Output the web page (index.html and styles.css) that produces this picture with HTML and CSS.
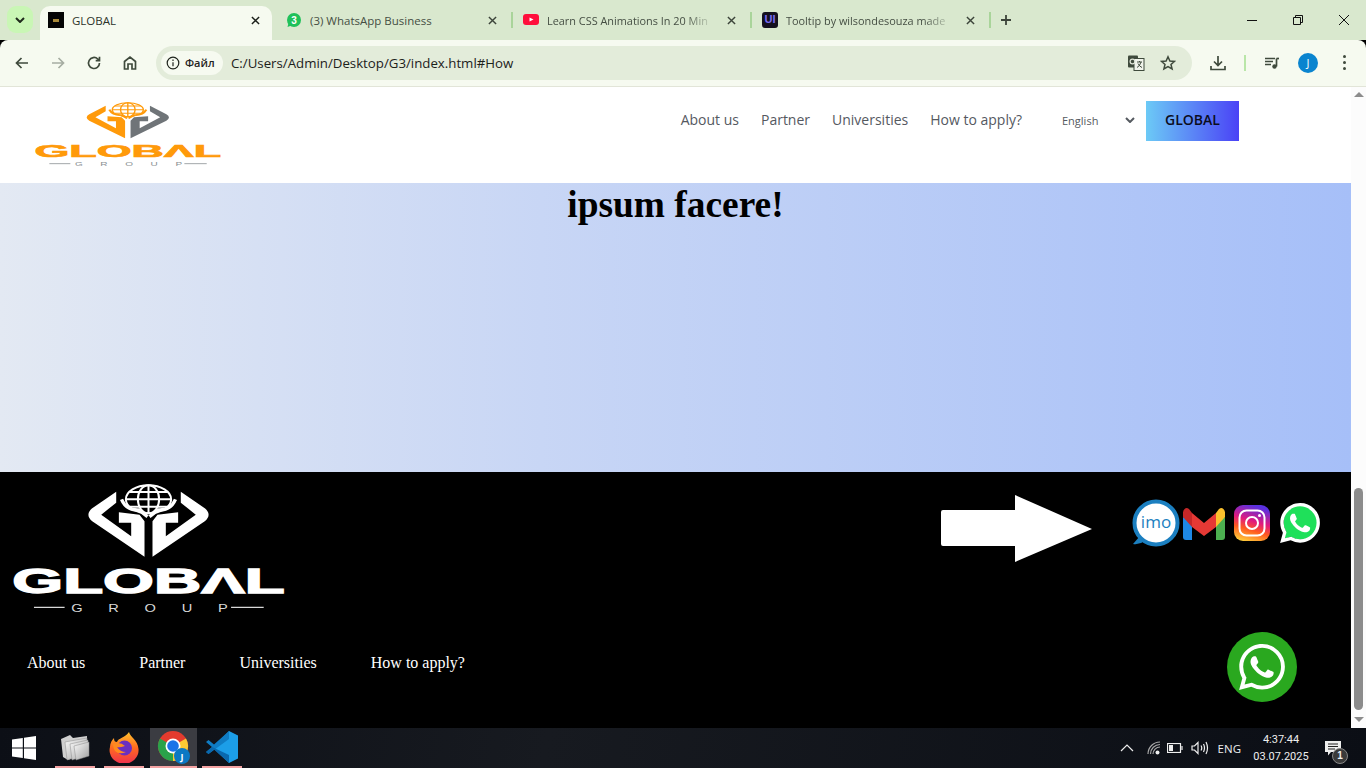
FILE: index.html
```html
<!DOCTYPE html>
<html lang="ru">
<head>
<meta charset="utf-8">
<title>GLOBAL</title>
<link rel="stylesheet" href="styles.css">
</head>
<body>

<svg class="defs" aria-hidden="true">
	<symbol id="logo" viewBox="40 30 820 390" preserveAspectRatio="none">
		<path class="logo-left" d="M350 53V86L305 122 395 187V146H358V115L420 122 435 142V248L278 142Q255 122 278 103Z"/>
		<path class="logo-right" d="M544 53V86L589 122 499 187V146H536V115L474 122 459 142V248L616 142Q639 122 616 103Z"/>
		<g class="logo-globe">
			<ellipse cx="447" cy="76" rx="68" ry="42"/>
			<ellipse cx="447" cy="76" rx="32" ry="42"/>
			<path d="M447 34V118M379 76H515M390 54H504M390 98H504"/>
		</g>
		<path class="logo-hands" d="M366 76Q380 110 418 108L444 128M528 76Q514 110 476 108L450 128"/>
		<path class="logo-rule" d="M103 400H195M695 400H793"/>
	</symbol>
	<symbol id="wa" viewBox="0 0 24 24">
		<path d="M17.472 14.382c-.297-.149-1.758-.867-2.03-.967-.273-.099-.471-.148-.67.15-.197.297-.767.966-.94 1.164-.173.199-.347.223-.644.075-.297-.15-1.255-.463-2.39-1.475-.883-.788-1.48-1.761-1.653-2.059-.173-.297-.018-.458.13-.606.134-.133.298-.347.446-.52.149-.174.198-.298.298-.497.099-.198.05-.371-.025-.52-.075-.149-.669-1.612-.916-2.207-.242-.579-.487-.5-.669-.51-.173-.008-.371-.01-.57-.01-.198 0-.52.074-.792.372-.272.297-1.04 1.016-1.04 2.479 0 1.462 1.065 2.875 1.213 3.074.149.198 2.096 3.2 5.077 4.487.709.306 1.262.489 1.694.625.712.227 1.36.195 1.871.118.571-.085 1.758-.719 2.006-1.413.248-.694.248-1.289.173-1.413-.074-.124-.272-.198-.57-.347m-5.421 7.403h-.004a9.87 9.87 0 01-5.031-1.378l-.361-.214-3.741.982.998-3.648-.235-.374a9.86 9.86 0 01-1.51-5.26c.001-5.45 4.436-9.884 9.888-9.884 2.64 0 5.122 1.03 6.988 2.898a9.825 9.825 0 012.893 6.994c-.003 5.45-4.437 9.884-9.885 9.884m8.413-18.297A11.815 11.815 0 0012.05 0C5.495 0 .16 5.335.157 11.892c0 2.096.547 4.142 1.588 5.945L.057 24l6.305-1.654a11.882 11.882 0 005.683 1.448h.005c6.554 0 11.89-5.335 11.893-11.893a11.821 11.821 0 00-3.48-8.413Z"/>
	</symbol>
	<symbol id="x" viewBox="0 0 10 10">
		<path d="M1 1L9 9M9 1L1 9"/>
	</symbol>
</svg>

<!-- browser chrome -->
<div class="tabstrip">
	<button class="tab_search"><svg width="10" height="6" viewBox="0 0 10 6"><path d="M1 1L5 5 9 1"/></svg></button>
	<div class="tab tab_active">
		<span class="favicon favicon_global"><i></i></span>
		<span class="tab_title">GLOBAL</span>
		<svg class="tab_x"><use href="#x"/></svg>
	</div>
	<div class="tab">
		<svg class="favicon" viewBox="0 0 16 16"><circle cx="8" cy="8" r="7" fill="#1fc15a"/><path d="M1.5 15L2.6 10.5 5.5 13.5Z" fill="#1fc15a"/><text class="favicon_num" x="8" y="11.5">3</text></svg>
		<span class="tab_title">(3) WhatsApp Business</span>
		<svg class="tab_x"><use href="#x"/></svg>
	</div>
	<i class="tab_sep"></i>
	<div class="tab">
		<svg class="favicon" viewBox="0 0 16 16"><rect y="2" width="16" height="11" rx="3" fill="#ff0f3c"/><path d="M6.5 5.5L10.5 7.5 6.5 9.5Z" fill="#fff"/></svg>
		<span class="tab_title tab_fade">Learn CSS Animations In 20 Min</span>
		<svg class="tab_x"><use href="#x"/></svg>
	</div>
	<i class="tab_sep"></i>
	<div class="tab">
		<span class="favicon favicon_ui">UI</span>
		<span class="tab_title tab_fade">Tooltip by wilsondesouza made</span>
		<svg class="tab_x"><use href="#x"/></svg>
	</div>
	<i class="tab_sep"></i>
	<svg class="tab_new" width="12" height="12" viewBox="0 0 12 12"><path d="M6 1V11M1 6H11"/></svg>
	<div class="window_btns">
		<svg viewBox="0 0 12 12"><path d="M1 6.500H11"/></svg>
		<svg viewBox="0 0 12 12"><path d="M1.500 3.500H8.500V10.500H1.500ZM3.500 3.500V1.500H10.500V8.500H8.500"/></svg>
		<svg viewBox="0 0 12 12"><path d="M1 1L11 11M11 1L1 11"/></svg>
	</div>
</div>

<div class="toolbar">
	<span class="tool"><svg viewBox="0 0 16 16"><path d="M14 8H2.5M7.5 3L2.5 8 7.5 13"/></svg></span>
	<span class="tool tool_off"><svg viewBox="0 0 16 16"><path d="M2 8H13.5M8.5 3L13.5 8 8.5 13"/></svg></span>
	<span class="tool"><svg viewBox="0 0 16 16"><path d="M13.5 8A5.5 5.5 0 1 1 11.8 4L13.5 5.6M13.5 1.8V5.6H9.7"/></svg></span>
	<span class="tool"><svg viewBox="0 0 16 16"><path d="M2.5 14V6.5L8 2 13.5 6.5V14H10V9H6V14Z"/></svg></span>
	<div class="omnibox">
		<span class="chip"><svg width="14" height="14" viewBox="0 0 14 14"><circle cx="7" cy="7" r="5.8"/><path d="M7 6.2V10.2M7 3.6V5"/></svg>Файл</span>
		<span class="url">C:/Users/Admin/Desktop/G3/index.html#How</span>
		<span class="omni_icon">
			<svg width="18" height="16" viewBox="0 0 18 16"><rect x="1" y="0.5" width="10" height="12" rx="1" fill="#3f4a3c"/><rect x="7" y="3.5" width="10" height="12" fill="#f1f4ec" stroke="#3f4a3c"/><path d="M10 7H15M12.5 6V7M14 7Q13 11 10 12.5M11 8.5Q12.5 11.5 15 12.5" fill="none" stroke="#3f4a3c"/><circle cx="5.5" cy="6.5" r="2.4" fill="none" stroke="#dfe5d8" stroke-width="1.2"/></svg>
		</span>
		<span class="omni_icon">
			<svg width="16" height="16" viewBox="0 0 16 16"><path class="stroke_icon" d="M8 1.8L9.9 6 14.5 6.4 11 9.4 12.1 14 8 11.6 3.9 14 5 9.4 1.5 6.4 6.1 6Z"/></svg>
		</span>
	</div>
	<span class="tool tool_dl"><svg viewBox="0 0 16 16"><path d="M8 1V10M4 6.5L8 10.5 12 6.5M1 11V14.5H15V11"/></svg></span>
	<i class="tool_sep"></i>
	<span class="tool"><svg viewBox="0 0 16 16"><path d="M1 3.5H11M1 6.5H9M1 9.5H7M12.5 3.5V11.5"/><circle class="note" cx="10.5" cy="11.5" r="2.2"/><path d="M12.5 3.5H15"/></svg></span>
	<span class="tool"><span class="avatar">J</span></span>
	<span class="tool tool_menu"><i></i><i></i><i></i></span>
</div>

<!-- page in the viewport -->
<div class="viewport">
	<div class="page">
		<header class="site_head">
			<svg class="logo_orange" viewBox="40 30 820 390" preserveAspectRatio="none">
				<use href="#logo" x="40" y="30" width="820" height="390"/>
				<text class="logo-word" x="38" y="358" textLength="818" lengthAdjust="spacingAndGlyphs">GLOBΛL</text>
				<text class="logo-sub" transform="translate(215 415) scale(1 .72)" textLength="470">GROUP</text>
			</svg>
			<nav class="site_nav">
				<a>About us</a>
				<a>Partner</a>
				<a>Universities</a>
				<a>How to apply?</a>
			</nav>
			<div class="lang">
				<span>English</span>
				<svg width="10" height="6" viewBox="0 0 10 6"><path d="M1 1L5 5 9 1"/></svg>
			</div>
			<a class="btn_global">GLOBAL</a>
		</header>

		<section class="hero">
			<h1>ipsum facere!</h1>
		</section>

		<footer class="site_foot">
			<div class="foot_top">
				<svg class="logo_white" viewBox="40 30 820 390" preserveAspectRatio="none">
					<use href="#logo" x="40" y="30" width="820" height="390"/>
					<text class="logo-word" x="38" y="358" textLength="818" lengthAdjust="spacingAndGlyphs">GLOBΛL</text>
					<text class="logo-sub" transform="translate(215 415) scale(1 .72)" textLength="470">GROUP</text>
				</svg>
				<div class="social">
					<svg class="arrow" viewBox="0 0 151 67"><path d="M2 15H74V0L151 34 74 67V51H2Q0 51 0 49V17Q0 15 2 15Z"/></svg>
					<svg class="ic_imo" viewBox="0 0 48 48">
						<circle cx="24" cy="24" r="21.5" fill="#fff" stroke="#1b7fc0" stroke-width="4"/>
						<path d="M1 45L8 37 13 42Q7 46 1 45Z" fill="#1b7fc0"/>
						<text class="imo_text" x="24" y="29">imo</text>
					</svg>
					<svg class="ic_gmail" viewBox="0 0 42 33">
						<path d="M0 10V30Q0 33 3 33H9V14Z" fill="#1e88e5"/>
						<path d="M33 14V33H39Q42 33 42 30V10Z" fill="#4caf50"/>
						<path d="M9 6L21 16 33 6V20L21 29 9 20Z" fill="#e53935"/>
						<path d="M0 5V10L9 20V6L6 2Q2 -1 0 5Z" fill="#c62828"/>
						<path d="M42 5V10L33 20V6L36 2Q40 -1 42 5Z" fill="#fbc02d"/>
					</svg>
					<svg class="ic_insta" viewBox="0 0 36 36">
						<defs>
							<linearGradient id="ig" x1="0.2" y1="1" x2="0.5" y2="0">
								<stop offset="0" stop-color="#ffd23c"/>
								<stop offset="0.35" stop-color="#ff5a1f"/>
								<stop offset="0.6" stop-color="#e0197f"/>
								<stop offset="1" stop-color="#5a30e0"/>
							</linearGradient>
						</defs>
						<rect width="36" height="36" rx="9" fill="url(#ig)"/>
						<rect x="5.5" y="5.5" width="25" height="25" rx="7" fill="none" stroke="#fff" stroke-width="2"/>
						<circle cx="18" cy="18" r="6" fill="none" stroke="#fff" stroke-width="2"/>
						<circle cx="25.5" cy="10.5" r="1.5" fill="#fff"/>
					</svg>
					<svg class="ic_wa" viewBox="0 0 40 40">
						<circle cx="20.5" cy="19.5" r="17" fill="#1fe05a"/>
						<path d="M4 36L7 27 13 33Z" fill="#1fe05a"/>
						<use href="#wa" width="40" height="40" class="wa_white"/>
					</svg>
				</div>
			</div>
			<nav class="foot_nav">
				<a>About us</a>
				<a>Partner</a>
				<a>Universities</a>
				<a>How to apply?</a>
			</nav>
			<a class="wa_float"><svg><use href="#wa"/></svg></a>
		</footer>
	</div>
	<div class="scrollbar">
		<i class="scroll_up"></i>
		<i class="scroll_thumb"></i>
		<i class="scroll_down"></i>
	</div>
</div>

<!-- windows taskbar -->
<div class="taskbar">
	<span class="task task_start">
		<svg width="24" height="24" viewBox="0 0 24 24"><path d="M0 3.5L10.8 2V11.4H0ZM12 1.8L24 0V11.4H12ZM0 12.6H10.8V22L0 20.5ZM12 12.6H24V24L12 22.2Z"/></svg>
	</span>
	<span class="task task_open">
		<svg width="30" height="28" viewBox="0 0 30 28">
			<defs><linearGradient id="fd" x1="0" y1="0" x2="1" y2="1"><stop offset="0" stop-color="#fafafa"/><stop offset="1" stop-color="#a0a0a0"/></linearGradient></defs>
			<path d="M1 6L10 2 13 5 27 3V20L8 27 3 24Z" fill="#cfcfcf"/>
			<path d="M5 9L27 5V21L7 27Z" fill="url(#fd)" stroke="#8a8a8a" stroke-width="0.5"/>
			<path d="M10 11L28 7V22L12 27Z" fill="url(#fd)" stroke="#8a8a8a" stroke-width="0.5"/>
			<path d="M14 13L29 9V23L16 27Z" fill="url(#fd)" stroke="#8a8a8a" stroke-width="0.5"/>
		</svg>
	</span>
	<span class="task task_open task_ff">
		<svg width="32" height="32" viewBox="0 0 32 32">
			<defs><linearGradient id="ff" x1="0.5" y1="0" x2="0.5" y2="1"><stop offset="0" stop-color="#ffc22e"/><stop offset="0.5" stop-color="#ff6a1f"/><stop offset="1" stop-color="#f0304f"/></linearGradient></defs>
			<path d="M21 1C22 6 30 9 30.500 18A14.500 13.500 0 1 1 2 16C2 12 4 9 6 7C6 10 7 11 9 11C10 7 17 7 21 1Z" fill="url(#ff)"/>
			<circle cx="16.500" cy="17" r="7.500" fill="#6a2fc0"/>
			<path d="M5 13Q12 10 17 15Q11 17 9 16Q12 21 18 21Q11 24 7 20Q5 17 5 13Z" fill="#ff8a1f"/>
		</svg>
	</span>
	<span class="task task_chrome">
		<svg width="34" height="34" viewBox="0 0 34 34">
			<circle cx="16" cy="16" r="15" fill="#e33b2e"/>
			<path d="M16 16L3 8.500A15 15 0 0 0 16 31L23.500 18Z" fill="#2aa24a"/>
			<path d="M16 16L29 8.500A15 15 0 0 1 16 31Z" fill="#fcc934"/>
			<circle cx="16" cy="16" r="7.500" fill="#fff"/>
			<circle cx="16" cy="16" r="5.800" fill="#1a73e8"/>
			<circle cx="25" cy="26" r="8" fill="#0b78c4"/>
			<text class="badge_j" x="25" y="29.500">J</text>
		</svg>
	</span>
	<span class="task task_open">
		<svg width="34" height="34" viewBox="0 0 34 34">
			<path d="M24 1L33 5.500V28.500L24 33 8 18Z" fill="#1c9ee8"/>
			<path d="M24 1L9 14.500 3.500 10 1 12 7 17 1 22 3.500 24 24 9Z" fill="#0f7cc4"/>
			<path d="M24 33V25L7 17 1 22 3.500 24 9 19.500Z" fill="#0a68ad"/>
		</svg>
	</span>
	<div class="tray">
		<svg class="tray_icon tray_up" width="14" height="8" viewBox="0 0 14 8"><path d="M1 7L7 1 13 7"/></svg>
		<svg class="tray_icon tray_wifi" width="14" height="14" viewBox="0 0 14 14"><path d="M1 13A12 12 0 0 1 13 1M3.500 13A9.500 9.500 0 0 1 13 3.500M6 13A7 7 0 0 1 13 6"/><circle cx="10.500" cy="11.500" r="2" class="tray_dot"/></svg>
		<svg class="tray_icon tray_bat" width="16" height="10" viewBox="0 0 16 10"><rect x="0.500" y="0.500" width="13" height="9"/><rect x="2" y="2" width="4" height="6" class="tray_dot"/><path d="M15 3V7"/></svg>
		<svg class="tray_icon tray_vol" width="18" height="14" viewBox="0 0 18 14"><path d="M1 5V9H3.500L7 12.500V1.500L3.500 5ZM10 4.500Q11.500 7 10 9.500M12.500 3Q14.500 7 12.500 11M15 1Q18 7 15 13"/></svg>
		<span class="tray_lang">ENG</span>
		<span class="clock"><b>4:37:44</b><b>03.07.2025</b></span>
		<span class="notif">
			<svg width="16" height="15" viewBox="0 0 16 15"><path class="tray_dot" d="M0 0H16V11H6L3 14.500V11H0Z"/><path class="notif_lines" d="M3 3H13M3 5.500H13M3 8H10"/></svg>
			<em>1</em>
		</span>
	</div>
</div>

</body>
</html>
```

FILE: styles.css
```css
* {
	box-sizing: border-box;
}
html, body {
	margin: 0;
	height: 768px;
	overflow: hidden;
}
body {
	font-family: "Open Sans", "Noto Sans", sans-serif;
	display: flex;
	flex-direction: column;
	background: #000;
}
.defs {
	width: 0;
	height: 0;
	display: block;
}
a {
	text-decoration: none;
}

/* tabs */
.tabstrip {
	height: 40px;
	background: #d9e8ce;
	display: flex;
	align-items: flex-end;
	padding-left: 7px;
	flex: none;
}
.tab_search {
	width: 26px;
	height: 27px;
	margin: 0 7px 7px 0;
	padding: 0;
	border: 0;
	border-radius: 9px;
	background: #c9f6b5;
	display: flex;
	align-items: center;
	justify-content: center;
}
.tab_search path {
	fill: none;
	stroke: #1f2a1c;
	stroke-width: 2;
}
.tab {
	width: 238px;
	height: 34px;
	display: flex;
	align-items: center;
	padding: 0 13px 6px 12px;
	font-size: 11.5px;
	color: #454e43;
}
.tab + .tab_sep {
	margin-left: -1px;
}
.tab_sep + .tab {
	padding-left: 10px;
}
.tab_active {
	width: 232px;
	margin-right: 2px;
	padding: 0 10px 6px 8px;
	background: #f6faf0;
	border-radius: 10px 10px 0 0;
	color: #2c322a;
}
.tab_sep {
	width: 2px;
	height: 16px;
	margin-bottom: 12px;
	background: #a9d49a;
	flex: none;
}
.favicon {
	width: 16px;
	height: 16px;
	flex: none;
	margin-right: 8px;
}
.favicon_global {
	background: #050505;
	display: flex;
	align-items: center;
	justify-content: center;
}
.favicon_global i {
	width: 6px;
	height: 3px;
	background: #a98a3a;
}
.favicon_num {
	font: bold 10px "Liberation Sans", sans-serif;
	text-anchor: middle;
	fill: #fff;
}
.favicon_ui {
	background: #14101f;
	border-radius: 3px;
	color: #7c6cf0;
	font: bold 11px/15px "Liberation Sans", sans-serif;
	text-align: center;
}
.tab_title {
	flex: 1;
	white-space: nowrap;
	overflow: hidden;
}
.tab_fade {
	font-size: 10.9px;
	-webkit-mask-image: linear-gradient(90deg, #000 82%, transparent);
	mask-image: linear-gradient(90deg, #000 82%, transparent);
}
.tab_x {
	width: 9px;
	height: 9px;
	margin-left: 12px;
	margin-right: 2px;
	flex: none;
	fill: none;
	stroke: #3c443a;
	stroke-width: 1.6;
}
.tab_active .tab_x {
	stroke: #1b1f1a;
}
.tab_new {
	margin: 0 0 14px 9px;
	fill: none;
	stroke: #3c443a;
	stroke-width: 1.8;
}
.window_btns {
	margin-left: auto;
	height: 40px;
	display: flex;
	align-items: center;
	align-self: flex-start;
	gap: 34px;
	padding-right: 16px;
}
.window_btns svg {
	width: 12px;
	height: 12px;
	fill: none;
	stroke: #111;
	stroke-width: 1;
}

/* toolbar */
.toolbar {
	height: 47px;
	background: #f6faf0;
	border-bottom: 1px solid #e2e5d8;
	display: flex;
	align-items: center;
	padding: 0 4px 1px;
	flex: none;
	border-radius: 8px 8px 0 0;
}
.tool {
	width: 36px;
	height: 34px;
	display: flex;
	align-items: center;
	justify-content: center;
	flex: none;
}
.tool svg {
	width: 16px;
	height: 16px;
	fill: none;
	stroke: #3f4a3c;
	stroke-width: 1.7;
}
.tool_off svg {
	stroke: #a6ada2;
}
.tool .note {
	fill: #3f4a3c;
	stroke: none;
}
.tool_dl {
	margin-left: 8px;
}
.tool_sep {
	width: 2px;
	height: 16px;
	margin: 0 8px;
	background: #b9e6a8;
	flex: none;
}
.avatar {
	width: 20px;
	height: 20px;
	border-radius: 50%;
	background: #0a84cf;
	color: #fff;
	font-size: 11px;
	line-height: 20px;
	text-align: center;
}
.tool_menu {
	flex-direction: column;
	gap: 3px;
}
.tool_menu i {
	width: 3px;
	height: 3px;
	border-radius: 50%;
	background: #3f4a3c;
}
.omnibox {
	width: 1036px;
	height: 34px;
	margin-left: 8px;
	padding: 0 8px 0 5px;
	border-radius: 17px;
	background: #e3ecda;
	display: flex;
	align-items: center;
	flex: none;
}
.chip {
	height: 24px;
	width: 62px;
	border-radius: 12px;
	background: #f6faf0;
	display: flex;
	align-items: center;
	gap: 5px;
	padding-left: 5px;
	font-size: 11px;
	font-weight: 600;
	color: #1f241d;
}
.chip svg {
	fill: none;
	stroke: #1f241d;
	stroke-width: 1.2;
	flex: none;
}
.url {
	margin-left: 8px;
	font-size: 13.25px;
	color: #1c211b;
	flex: 1;
}
.omni_icon {
	width: 32px;
	display: flex;
	justify-content: center;
}
.stroke_icon {
	fill: none;
	stroke: #3f4a3c;
	stroke-width: 1.5;
}

/* page */
.viewport {
	height: 641px;
	display: flex;
	flex: none;
}
.page {
	width: 1351px;
	display: flex;
	flex-direction: column;
}
.site_head {
	height: 96px;
	background: #fff;
	display: flex;
	align-items: flex-start;
	padding: 14px 112px 0 35px;
	flex: none;
}
.logo_orange {
	width: 187px;
	height: 65px;
	margin-top: 1px;
	--logo-a: #ff9a0a;
	--logo-b: #6f7478;
	--logo-c: #ff9a0a;
	--logo-d: #8a8f93;
}
.site_nav {
	margin-left: auto;
	height: 40px;
	display: flex;
	align-items: center;
	gap: 22px;
	padding-bottom: 4px;
	font-size: 14px;
	color: #55595f;
}
.lang {
	width: 84px;
	height: 40px;
	margin: 0 0 0 40px;
	padding: 0 11px 2px 0;
	display: flex;
	align-items: center;
	justify-content: space-between;
	font-size: 11px;
	color: #555a60;
}
.lang path {
	fill: none;
	stroke: #555a60;
	stroke-width: 2;
}
.btn_global {
	width: 93px;
	height: 40px;
	background: linear-gradient(90deg, #6ccaf6, #4a42f6);
	color: #0b0d1e;
	font: 600 14px/38px "Open Sans", sans-serif;
	text-align: center;
}
.hero {
	height: 289px;
	background: linear-gradient(90deg, #e3e9f3, #c8d6f5 40%, #a6bff8);
	flex: none;
}
.hero h1 {
	margin: 0;
	font: bold 37.4px "Liberation Serif", serif;
	color: #000;
	text-align: center;
}
.site_foot {
	height: 256px;
	background: #000;
	position: relative;
	padding-top: 12px;
	flex: none;
}
.foot_top {
	display: flex;
	justify-content: space-between;
	padding: 0 31px 0 13px;
}
.logo_white {
	width: 273px;
	height: 130px;
	--logo-a: #fff;
	--logo-b: #fff;
	--logo-c: #fff;
	--logo-d: #d8d8d8;
}
.logo-left {
	fill: var(--logo-a);
}
.logo-right {
	fill: var(--logo-b);
}
.logo-globe * {
	fill: none;
	stroke: var(--logo-a);
	stroke-width: 6;
}
.logo-hands {
	fill: none;
	stroke: var(--logo-a);
	stroke-width: 10;
}
.logo-word {
	font: bold 103px "Liberation Sans", sans-serif;
	fill: var(--logo-c);
	stroke: var(--logo-c);
	stroke-width: 4;
}
.logo-sub {
	font: 44px "Liberation Sans", sans-serif;
	fill: var(--logo-d);
}
.logo-rule {
	stroke: var(--logo-d);
	stroke-width: 4;
	fill: none;
}
.social {
	display: flex;
	align-items: flex-start;
	padding-top: 11px;
}
.arrow {
	width: 151px;
	height: 67px;
	margin-right: 40px;
	fill: #fff;
}
.ic_imo {
	width: 48px;
	height: 48px;
	margin: 4px 3px 0 0;
}
.imo_text {
	font: 500 17px "Open Sans", sans-serif;
	text-anchor: middle;
	fill: #1b7fc0;
}
.ic_gmail {
	width: 42px;
	height: 33px;
	margin: 12px 9px 0 0;
}
.ic_insta {
	width: 36px;
	height: 36px;
	margin: 10px 10px 0 0;
}
.ic_wa {
	width: 40px;
	height: 40px;
	margin-top: 8px;
}
.wa_white {
	fill: #fff;
}
.foot_nav {
	display: flex;
	gap: 54px;
	padding: 40px 0 0 27px;
	font: 16px "Liberation Serif", serif;
	color: #fff;
}
.wa_float {
	position: absolute;
	left: 1227px;
	top: 160px;
	width: 70px;
	height: 70px;
	border-radius: 50%;
	background: #2aa81f;
	display: flex;
	align-items: center;
	justify-content: center;
}
.wa_float svg {
	width: 46px;
	height: 46px;
	fill: #fff;
}

/* scrollbar */
.scrollbar {
	width: 15px;
	background: #fcfcfc;
	display: flex;
	flex-direction: column;
	align-items: center;
	padding: 5px 0 6px;
}
.scroll_up, .scroll_down {
	width: 0;
	height: 0;
	border-left: 5px solid transparent;
	border-right: 5px solid transparent;
}
.scroll_up {
	border-bottom: 5px solid #8c8c8c;
}
.scroll_down {
	border-top: 5px solid #8c8c8c;
}
.scroll_thumb {
	width: 9px;
	height: 222px;
	margin-top: auto;
	margin-bottom: 7px;
	border-radius: 5px;
	background: #8c8c8c;
}

/* taskbar */
.taskbar {
	height: 40px;
	background: linear-gradient(100deg, #0c0f16, #171a20 40%, #0b0e15);
	display: flex;
	flex: none;
	color: #eee;
}
.task {
	width: 48px;
	height: 40px;
	display: flex;
	align-items: center;
	justify-content: center;
	flex: none;
}
.task_start {
	width: 48px;
	margin-right: 3px;
	fill: #fff;
}
.task_open {
	width: 40px;
	margin: 0 4px;
	border-bottom: 2px solid #f4a3a3;
}
.task_ff {
	margin-left: 5px;
}
.task_chrome {
	width: 47px;
	margin-left: 2px;
	margin-right: 1px;
	background: #3b3c42;
	border-bottom: 2px solid #f4a3a3;
}
.badge_j {
	font: bold 9px "Open Sans", sans-serif;
	text-anchor: middle;
	fill: #fff;
}
.tray {
	margin-left: auto;
	display: flex;
	align-items: center;
	padding-right: 25px;
	font-size: 12px;
}
.tray_icon {
	fill: none;
	stroke: #eee;
	stroke-width: 1.2;
}
.tray_up {
	margin-right: 13px;
}
.tray_wifi {
	margin-right: 6px;
	stroke: #a8a8a8;
}
.tray_bat {
	margin-right: 8px;
}
.tray_vol {
	margin-right: 9px;
}
.tray .tray_dot {
	fill: #eee;
	stroke: none;
}
.tray_lang {
	font-size: 11.5px;
}
.clock {
	width: 70px;
	margin-left: 5px;
	display: flex;
	flex-direction: column;
	align-items: center;
	font: 11px/17px Roboto, sans-serif;
}
.clock b {
	font-weight: 400;
}
.notif {
	position: relative;
	margin-left: 9px;
	height: 15px;
	display: block;
}
.notif_lines {
	stroke: #222;
	fill: none;
}
.notif em {
	position: absolute;
	left: 7px;
	top: 7px;
	width: 16px;
	height: 16px;
	border-radius: 50%;
	background: #3a3a3a;
	border: 1px solid #888;
	font: bold 10px/14px "Liberation Sans", sans-serif;
	text-align: center;
}
```
